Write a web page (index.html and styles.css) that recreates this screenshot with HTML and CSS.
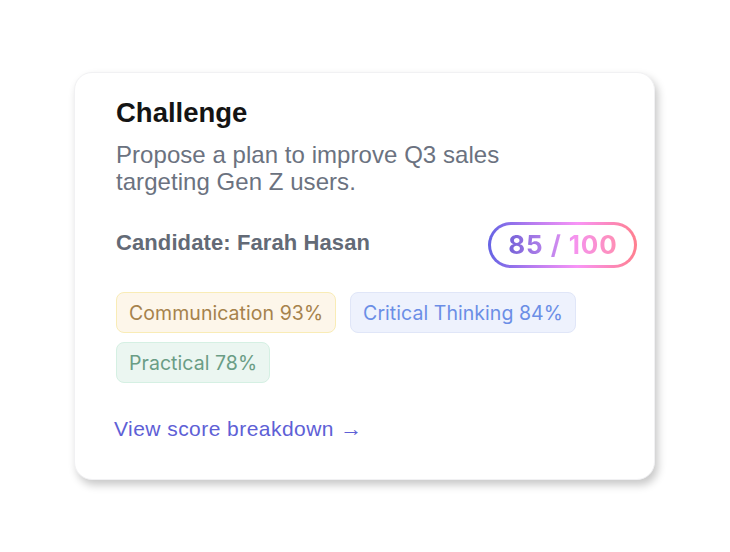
FILE: index.html
```html
<!DOCTYPE html>
<html lang="en">
<head>
<meta charset="utf-8">
<title>Challenge</title>
<link rel="stylesheet" href="styles.css">
</head>
<body>
<main class="stage">
  <section class="card">
    <h1 class="title">Challenge</h1>
    <p class="desc">Propose a plan to improve Q3 sales<br>targeting Gen Z users.</p>
    <div class="candidate-row">
      <span class="candidate">Candidate: Farah Hasan</span>
      <span class="score"><span class="score-text">85 / 100</span></span>
    </div>
    <div class="chips">
      <span class="chip chip-comm">Communication 93%</span>
      <span class="chip chip-crit">Critical Thinking 84%</span>
      <span class="chip chip-prac">Practical 78%</span>
    </div>
    <a class="link" href="#">View score breakdown <span class="arrow">→</span></a>
  </section>
</main>
</body>
</html>
```
FILE: styles.css
```css
* { box-sizing: border-box; }
html, body { margin: 0; padding: 0; background: #ffffff; }
body { width: 730px; height: 552px; overflow: hidden; font-family: "Liberation Sans", Arial, sans-serif; }

.stage {
  padding: 72px 0 0 74px;
}

.card {
  width: 581px;
  height: 408px;
  background: #ffffff;
  border: 1px solid #f1f1f3;
  border-radius: 18px;
  box-shadow: 3px 5px 8px rgba(0, 0, 0, 0.22);
  padding: 24px 17px 0 41px;
  display: flex;
  flex-direction: column;
}

.title {
  margin: 0;
  font-size: 27.5px;
  line-height: 32px;
  font-weight: 700;
  color: #141414;
}

.desc {
  margin: 12px 0 0;
  font-size: 24px;
  line-height: 27px;
  letter-spacing: 0.05px;
  color: #6b7280;
}

.candidate-row {
  margin-top: 27px;
  display: flex;
  align-items: center;
  justify-content: space-between;
}

.candidate {
  font-size: 22px;
  line-height: 26px;
  font-weight: 700;
  letter-spacing: 0.1px;
  color: #636a76;
  margin-top: -4px;
}

.score {
  height: 46px;
  width: 149px;
  border: 3px solid transparent;
  border-radius: 23px;
  background:
    linear-gradient(#ffffff, #ffffff) padding-box,
    linear-gradient(90deg, #6563e4 0%, #b77cf0 30%, #f894f6 60%, #ff7f8e 100%) border-box;
  display: flex;
  align-items: center;
  justify-content: center;
}

.score-text {
  font-family: Inter, "Noto Sans", sans-serif;
  font-weight: 700;
  font-size: 26px;
  line-height: 30px;
  letter-spacing: 0.9px;
  margin-left: 1px;
  background: linear-gradient(90deg, #7562d8 0%, #c186ee 40%, #f593ef 60%, #ff8fb4 100%);
  -webkit-background-clip: text;
  background-clip: text;
  color: transparent;
}

.chips {
  margin-top: 24px;
  display: flex;
  flex-wrap: wrap;
  column-gap: 14px;
  row-gap: 9px;
  width: 480px;
}

.chip {
  height: 41px;
  padding: 0 12px;
  border-radius: 8px;
  border: 1.5px solid;
  font-family: Inter, "Noto Sans", sans-serif;
  font-size: 19.5px;
  letter-spacing: 0.05px;
  display: inline-flex;
  align-items: center;
}

.chip-comm { background: #fdf6ea; border-color: #f9ecb6; color: #a6824c; }
.chip-crit { background: #eef2fd; border-color: #e0e6f8; color: #6b8ee6; }
.chip-prac { background: #ebf6f1; border-color: #d5f0e3; color: #6a9d85; }

.link {
  margin-top: 34px;
  margin-left: -2px;
  font-size: 21px;
  line-height: 24px;
  letter-spacing: 0.45px;
  color: #5e60d6;
  text-decoration: none;
  align-self: flex-start;
}

.arrow {
  font-size: 22px;
}
```
